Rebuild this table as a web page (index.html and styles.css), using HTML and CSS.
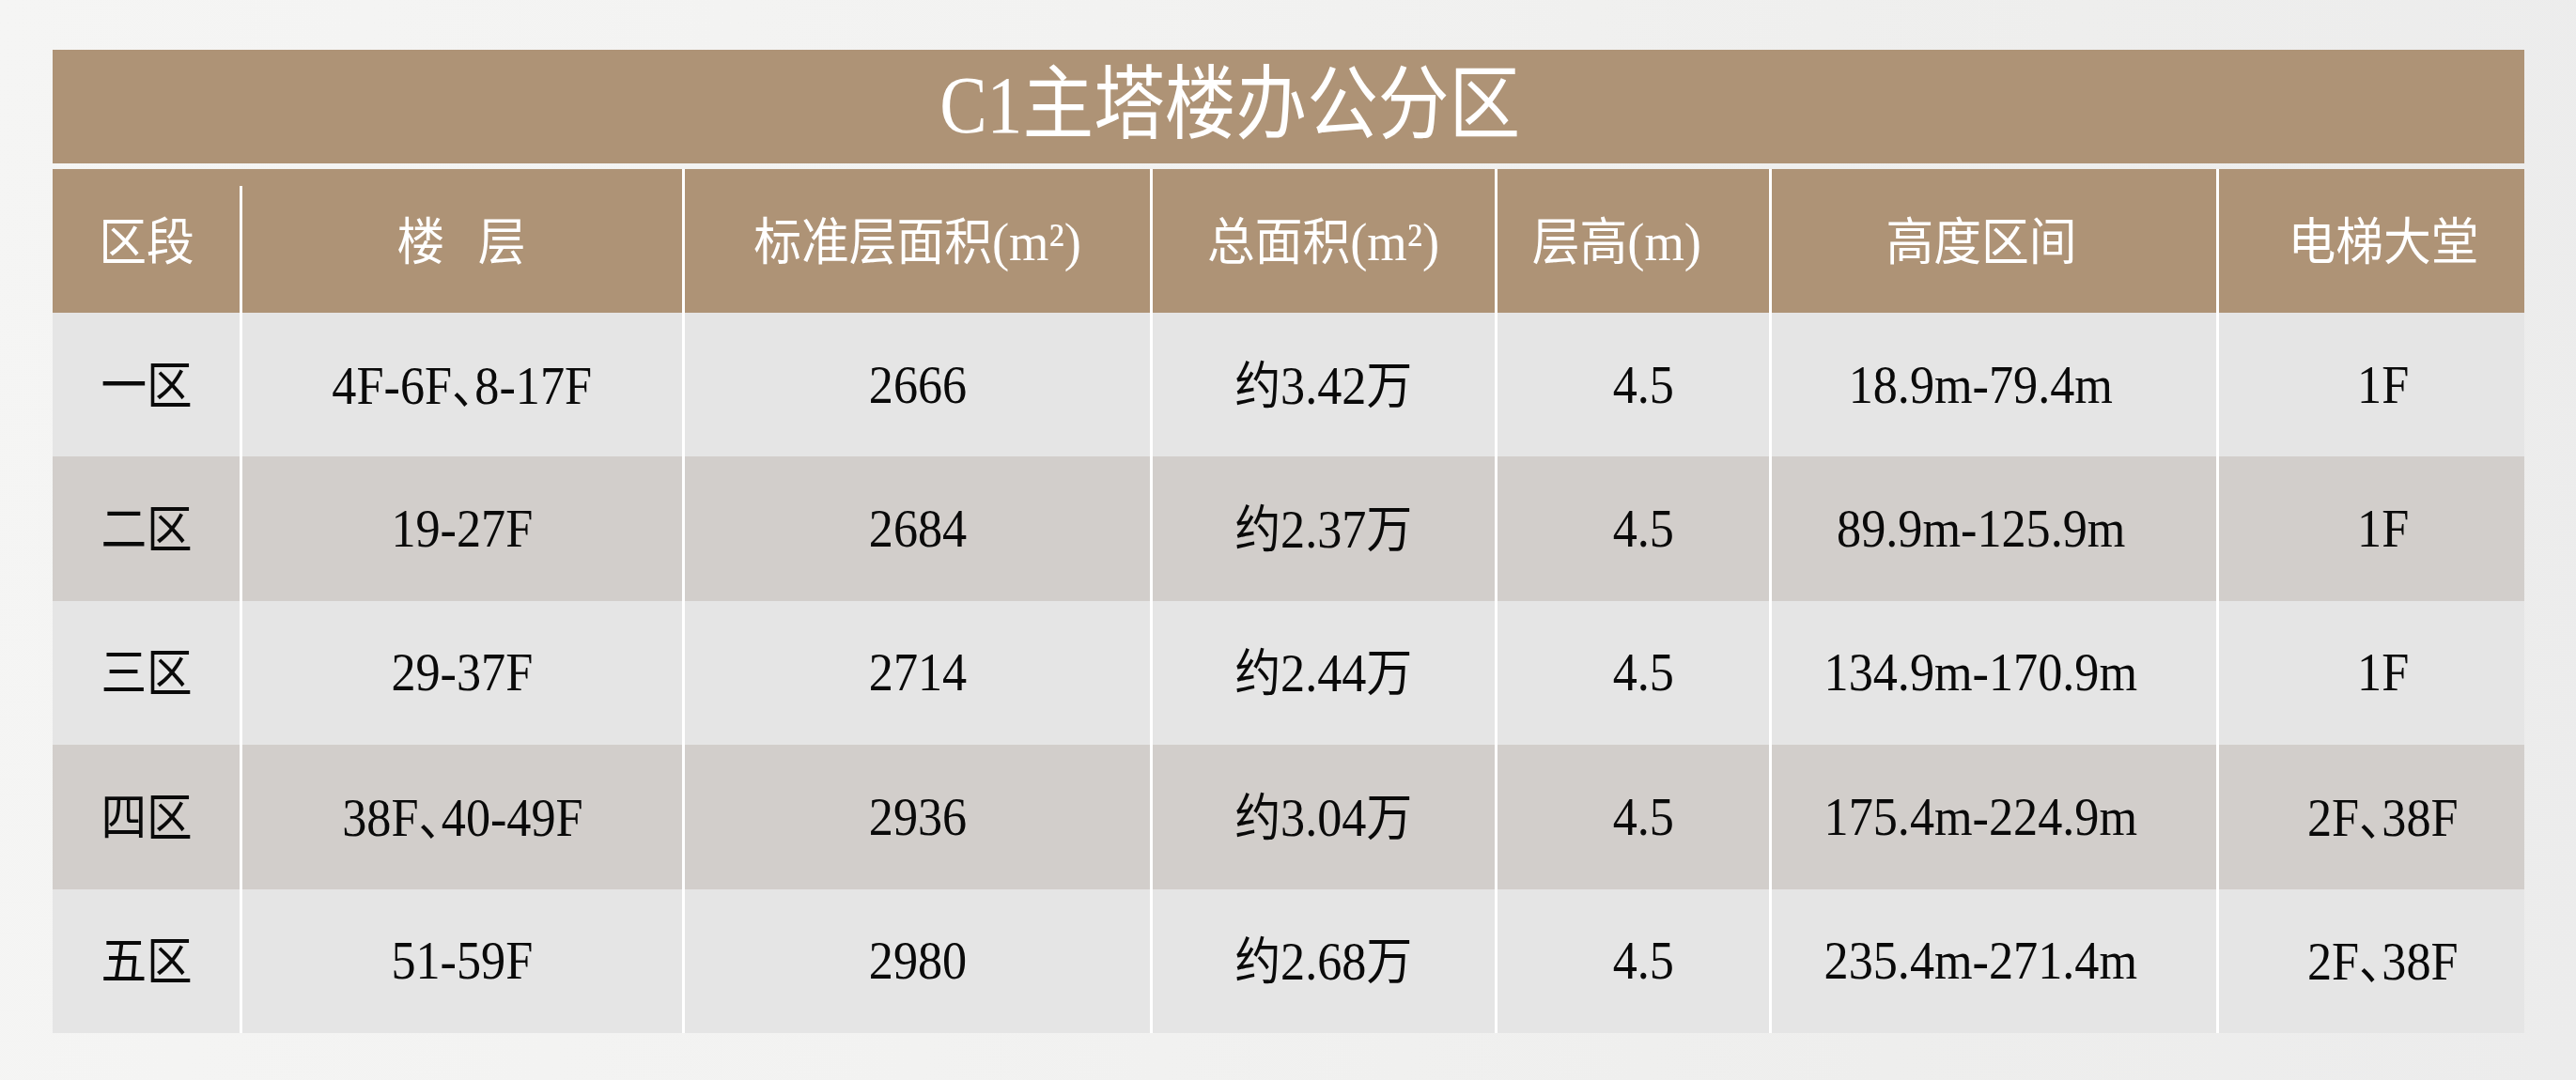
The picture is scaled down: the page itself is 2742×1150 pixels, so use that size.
FILE: index.html
```html
<!DOCTYPE html>
<html lang="zh-CN">
<head>
<meta charset="utf-8">
<title>C1主塔楼办公分区</title>
<link rel="stylesheet" href="styles.css">
</head>
<body>
<div class="page">
  <div class="board">
    <div class="title"><span class="sx">C1<span class="cj">主塔楼办公分区</span></span></div>

    <div class="row head">
      <div class="c k1"><span class="sx"><span class="cj">区段</span></span></div>
      <div class="c k2"><span class="sx"><span class="cj">楼<span class="sp"></span>层</span></span></div>
      <div class="c k3"><span class="sx"><span class="cj">标准层面积</span>(m²)</span></div>
      <div class="c k4"><span class="sx"><span class="cj">总面积</span>(m²)</span></div>
      <div class="c k5"><span class="sx"><span class="cj">层高</span>(m)</span></div>
      <div class="c k6"><span class="sx"><span class="cj">高度区间</span></span></div>
      <div class="c k7"><span class="sx"><span class="cj">电梯大堂</span></span></div>
    </div>

    <div class="row light">
      <div class="c k1"><span class="sx"><span class="cj">一区</span></span></div>
      <div class="c k2"><span class="sx">4F-6F<span class="cj dun">、</span>8-17F</span></div>
      <div class="c k3"><span class="sx">2666</span></div>
      <div class="c k4"><span class="sx"><span class="cj">约</span>3.42<span class="cj">万</span></span></div>
      <div class="c k5"><span class="sx">4.5</span></div>
      <div class="c k6"><span class="sx">18.9m-79.4m</span></div>
      <div class="c k7"><span class="sx">1F</span></div>
    </div>

    <div class="row dark">
      <div class="c k1"><span class="sx"><span class="cj">二区</span></span></div>
      <div class="c k2"><span class="sx">19-27F</span></div>
      <div class="c k3"><span class="sx">2684</span></div>
      <div class="c k4"><span class="sx"><span class="cj">约</span>2.37<span class="cj">万</span></span></div>
      <div class="c k5"><span class="sx">4.5</span></div>
      <div class="c k6"><span class="sx">89.9m-125.9m</span></div>
      <div class="c k7"><span class="sx">1F</span></div>
    </div>

    <div class="row light">
      <div class="c k1"><span class="sx"><span class="cj">三区</span></span></div>
      <div class="c k2"><span class="sx">29-37F</span></div>
      <div class="c k3"><span class="sx">2714</span></div>
      <div class="c k4"><span class="sx"><span class="cj">约</span>2.44<span class="cj">万</span></span></div>
      <div class="c k5"><span class="sx">4.5</span></div>
      <div class="c k6"><span class="sx">134.9m-170.9m</span></div>
      <div class="c k7"><span class="sx">1F</span></div>
    </div>

    <div class="row dark">
      <div class="c k1"><span class="sx"><span class="cj">四区</span></span></div>
      <div class="c k2"><span class="sx">38F<span class="cj dun">、</span>40-49F</span></div>
      <div class="c k3"><span class="sx">2936</span></div>
      <div class="c k4"><span class="sx"><span class="cj">约</span>3.04<span class="cj">万</span></span></div>
      <div class="c k5"><span class="sx">4.5</span></div>
      <div class="c k6"><span class="sx">175.4m-224.9m</span></div>
      <div class="c k7"><span class="sx">2F<span class="cj dun">、</span>38F</span></div>
    </div>

    <div class="row light">
      <div class="c k1"><span class="sx"><span class="cj">五区</span></span></div>
      <div class="c k2"><span class="sx">51-59F</span></div>
      <div class="c k3"><span class="sx">2980</span></div>
      <div class="c k4"><span class="sx"><span class="cj">约</span>2.68<span class="cj">万</span></span></div>
      <div class="c k5"><span class="sx">4.5</span></div>
      <div class="c k6"><span class="sx">235.4m-271.4m</span></div>
      <div class="c k7"><span class="sx">2F<span class="cj dun">、</span>38F</span></div>
    </div>
  </div>
</div>
</body>
</html>
```

FILE: styles.css
```css
html, body {
  margin: 0;
  padding: 0;
}

body {
  width: 2742px;
  height: 1150px;
  overflow: hidden;
  background: linear-gradient(100deg, #f5f5f4 0%, #f2f2f1 40%, #eeeeed 75%, #ececec 100%);
  font-family: "Liberation Serif", "Noto Sans CJK SC", serif;
  color: #0a0a0a;
}

.page {
  padding: 53px 0 0 56px;
}

.board {
  width: 2631px;
}

.title {
  height: 121px;
  box-sizing: border-box;
  background: #ae9376;
  color: #ffffff;
  display: flex;
  align-items: center;
  justify-content: center;
  padding: 0 124px 12px 0;
  margin-bottom: 6px;
  font-size: 86px;
  line-height: 1;
}

.title .sx {
  transform: scaleX(0.88);
}

.title .cj {
  font-size: 86px;
}

.row {
  display: grid;
  grid-template-columns: 199px 471px 498px 367px 292px 476px 328px;
  height: 153.4px;
}

.row.head {
  height: 153px;
  background: #ae9376;
  color: #ffffff;
}

.row.light {
  background: #e5e5e5;
}

.row.dark {
  background: #d2cecb;
}

.c {
  position: relative;
  box-sizing: border-box;
  display: flex;
  align-items: center;
  justify-content: center;
  border-left: 3px solid #ffffff;
  font-size: 58px;
  line-height: 1;
  white-space: nowrap;
}

.c.k1 {
  border-left: 0;
}

.head .c.k2 {
  border-left: 0;
}

.head .c.k2::before {
  content: "";
  position: absolute;
  left: 0;
  top: 18px;
  bottom: 0;
  width: 3px;
  background: #ffffff;
}

.sx {
  display: inline-block;
  transform: scaleX(0.9);
  white-space: nowrap;
}

.head .sx {
  transform: scaleX(0.94);
}

.cj {
  font-family: "Noto Sans CJK SC", sans-serif;
  font-size: 54px;
  font-weight: 400;
}

.dun {
  font-feature-settings: "halt";
}

.sp {
  display: inline-block;
  width: 38px;
}

.c.k5 {
  padding-left: 22px;
}

.head .c.k5 {
  padding-left: 0;
  padding-right: 36px;
}

.c.k6 {
  padding-right: 28px;
}

.c.k7 {
  padding-left: 24px;
}
```
